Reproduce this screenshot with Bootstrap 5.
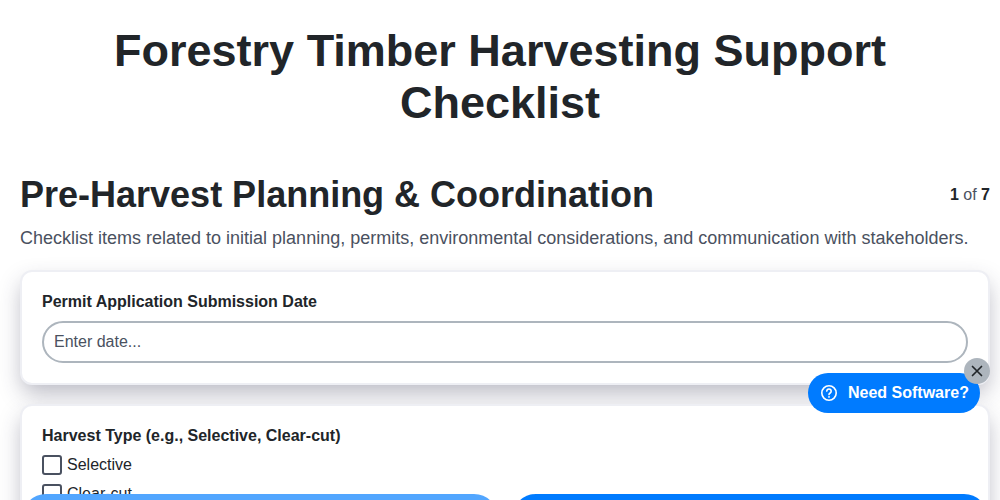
<!DOCTYPE html>
<html lang="en">
<head>
<meta charset="utf-8">
<title>Forestry Timber Harvesting Support Checklist</title>
<link rel="stylesheet" href="https://cdn.jsdelivr.net/npm/bootstrap@5.3.0/dist/css/bootstrap.min.css">
<style>
html,body{height:500px;overflow:hidden}
body{font-family:"Liberation Sans",Arial,sans-serif;color:#212529;background:#fff}
.page-wrap{padding:25px 10px 0 20px}
.main-title{font-size:45px;font-weight:700;line-height:52px;text-align:center;margin:0 10px 44px 0}
.sec-head{margin-bottom:9px}
.sec-title{font-size:36px;line-height:43px;font-weight:700;margin:0}
.pager{font-size:16px;color:#4a5160;line-height:24px}
.pager b{color:#212529}
.sec-desc{font-size:18px;line-height:27px;color:#4a5160;margin:0 0 18px;white-space:nowrap}
.item-box{background:#fff;border:2px solid #eeeff4;border-radius:12px;box-shadow:0 10px 22px -2px rgba(50,50,80,.34);padding:18px 20px 20px;margin-bottom:19px}
.item-label{font-size:16px;line-height:24px;font-weight:700;margin:0 0 7px;display:block}
.pill-input{display:block;width:100%;height:42px;border:2px solid #adb5bd;border-radius:21px;padding:0 10px;font:16px "Liberation Sans",Arial,sans-serif;color:#212529;background:#fff}
.pill-input::placeholder{color:#4a5160;opacity:1}
.chk-row{display:flex;align-items:center;gap:5px;line-height:20px;margin-bottom:9px;font-size:16px;color:#212529}
.chk-box{width:20px;height:20px;border:2px solid #4a5160;border-radius:3px;background:#fff;appearance:none;margin:0;flex:none}
.bottom-bar{position:fixed;left:22px;top:494px;width:966px;display:flex;gap:14px}
.bar-btn{flex:1;height:48px;border:0;border-radius:24px;background:#007bff}
.bar-btn.lighter{background:#52a6ff}
.promo{position:fixed;left:808px;top:373px;width:172px;height:40px;border-radius:20px;background:#007bff;color:#fff;font-size:16px;font-weight:700;display:flex;align-items:center;padding-left:12px;gap:10px;white-space:nowrap}
.promo-x{position:fixed;left:964px;top:358px;width:26px;height:26px;border-radius:50%;background:#adb5bd;border:0;padding:0;display:flex;align-items:center;justify-content:center}
</style>
</head>
<body>
<div class="page-wrap">
  <h1 class="main-title">Forestry Timber Harvesting Support Checklist</h1>
  <div class="sec-head d-flex justify-content-between align-items-center">
    <h2 class="sec-title">Pre-Harvest Planning &amp; Coordination</h2>
    <div class="pager"><b>1</b> of <b>7</b></div>
  </div>
  <p class="sec-desc">Checklist items related to initial planning, permits, environmental considerations, and communication with stakeholders.</p>
  <div class="item-box">
    <label class="item-label" for="d1">Permit Application Submission Date</label>
    <input id="d1" class="pill-input" type="text" placeholder="Enter date...">
  </div>
  <div class="item-box">
    <span class="item-label">Harvest Type (e.g., Selective, Clear-cut)</span>
    <label class="chk-row"><input class="chk-box" type="checkbox">Selective</label>
    <label class="chk-row"><input class="chk-box" type="checkbox">Clear-cut</label>
  </div>
</div>
<div class="bottom-bar">
  <button class="bar-btn lighter" type="button" aria-label="Previous"></button>
  <button class="bar-btn" type="button" aria-label="Next"></button>
</div>
<div class="promo">
  <svg width="18" height="18" viewBox="0 0 18 18" fill="none" stroke="#fff" stroke-width="1.6" aria-hidden="true"><circle cx="9" cy="9" r="7.2"/><path d="M6.800 7.100a2.200 2.200 0 1 1 3.400 1.900c-.8.500-1.200.9-1.200 1.600" stroke-linecap="round"/><circle cx="9" cy="12.900" r=".5" fill="#fff" stroke-width="1"/></svg>
  <span>Need Software?</span>
</div>
<button class="promo-x" type="button" aria-label="Close">
  <svg width="12" height="12" viewBox="0 0 12 12" stroke="#212529" stroke-width="1.7" stroke-linecap="round"><path d="M1.500 1.500l9 9M10.500 1.500l-9 9"/></svg>
</button>
</body>
</html>
